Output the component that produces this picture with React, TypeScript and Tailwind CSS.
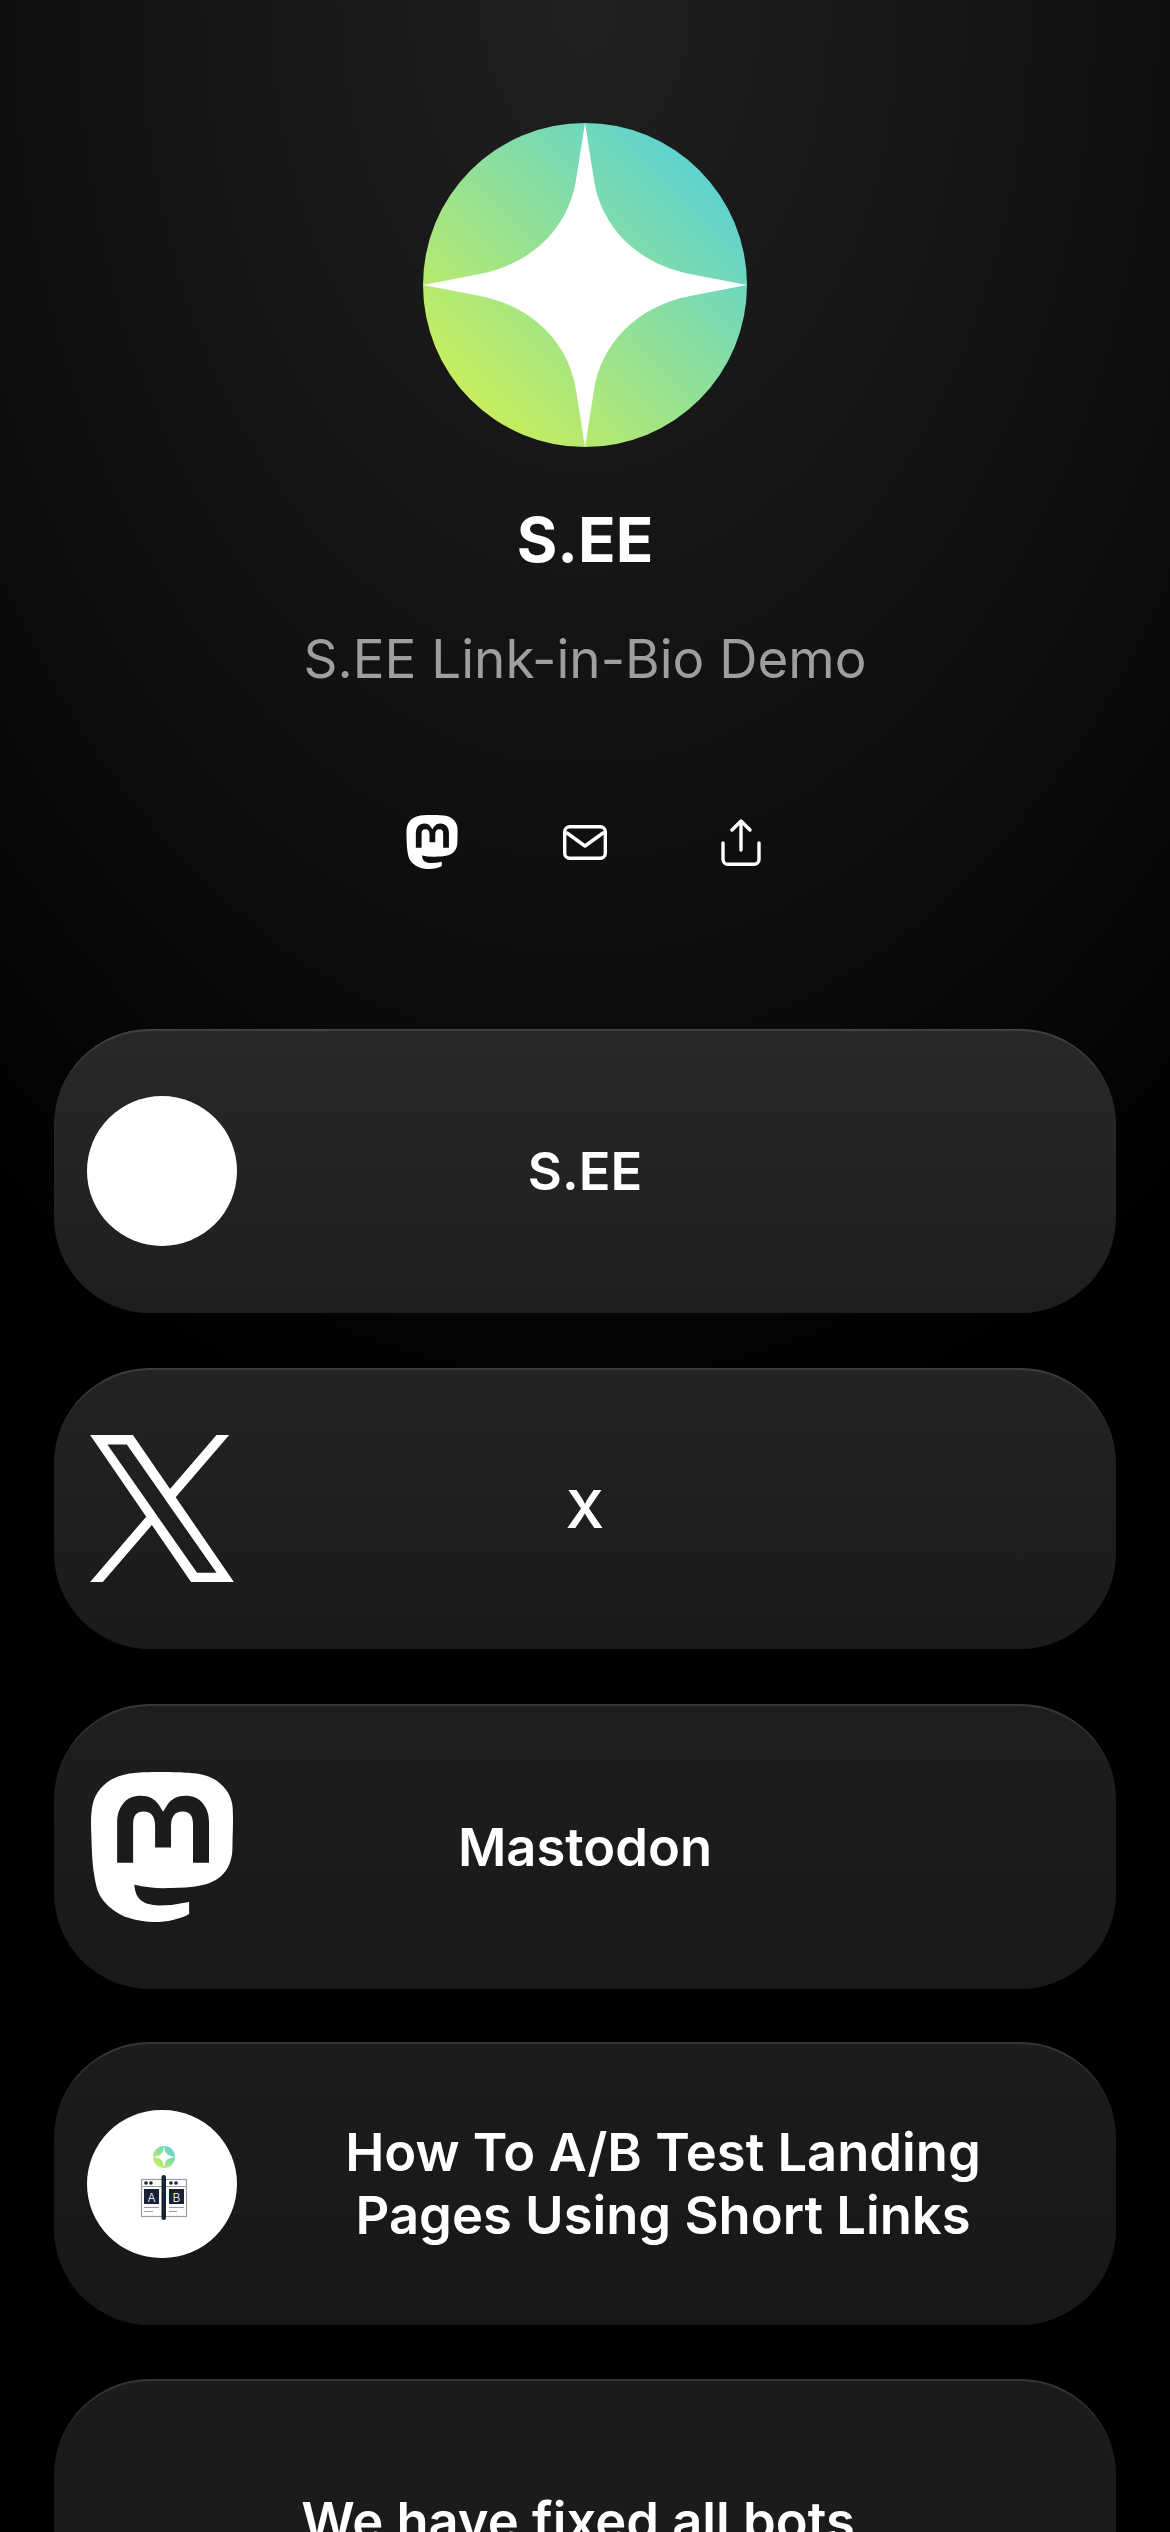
import React from "react";
import { SiMastodon } from "react-icons/si";

function StarLogo({ id, className }: { id: string; className: string }) {
  return (
    <svg viewBox="0 0 324 324" className={className}>
      <defs>
        <linearGradient id={id} x1="0.15" y1="0.85" x2="0.85" y2="0.15">
          <stop offset="0" stopColor="#c6ee5e" />
          <stop offset="1" stopColor="#5fd3ce" />
        </linearGradient>
      </defs>
      <circle cx="162" cy="162" r="162" fill={`url(#${id})`} />
      <path
        fill="#fff"
        d="M162 0L171 57C178 102 212 140 267 151L324 162L267 173C212 184 178 222 171 267L162 324L153 267C146 222 112 184 57 173L0 162L57 151C112 140 146 102 153 57Z"
      />
    </svg>
  );
}

function XLogo() {
  return (
    <svg viewBox="0 0 1200 1227" className="w-[146px] h-[147px]" fill="#fff">
      <path d="M714.163 519.284L1160.89 0H1055.03L667.137 450.887L357.328 0H0L468.492 681.821L0 1226.37H105.866L515.491 750.218L842.672 1226.37H1200L714.137 519.284H714.163ZM569.165 687.828L521.697 619.934L144.011 79.6944H306.615L611.412 515.685L658.88 583.579L1055.08 1150.3H892.476L569.165 687.854V687.828Z" />
    </svg>
  );
}

function AbThumb() {
  return (
    <div className="relative w-[150px] h-[148px] rounded-full bg-white shrink-0">
      <StarLogo id="thumb-star" className="absolute left-[66px] top-[36px] w-[22px] h-[22px]" />
      <svg viewBox="0 0 150 148" className="absolute inset-0 w-full h-full">
        <rect x="54.5" y="69.5" width="45" height="37" fill="#fff" stroke="#9b9ca5" strokeWidth="1.2" />
        <path d="M54.5 76.5H99.5" stroke="#9b9ca5" strokeWidth="1" />
        <circle cx="59" cy="73" r="1.8" fill="#1a2238" />
        <circle cx="64" cy="73" r="1.8" fill="#1a2238" />
        <circle cx="84" cy="73" r="1.8" fill="#1a2238" />
        <circle cx="89" cy="73" r="1.8" fill="#1a2238" />
        <rect x="57" y="79" width="15" height="15" fill="#1a2238" />
        <rect x="82" y="79" width="15" height="15" fill="#1a2238" />
        <text x="64.5" y="91.5" textAnchor="middle" fontFamily="Inter, sans-serif" fontSize="12" fontWeight="300" fill="#fff">A</text>
        <text x="89.5" y="91.5" textAnchor="middle" fontFamily="Inter, sans-serif" fontSize="12" fontWeight="300" fill="#fff">B</text>
        <path d="M57 97.5H72M57 101.5H66M82 97.5H97M82 101.5H90" stroke="#9b9ca5" strokeWidth="1.2" />
        <rect x="74.5" y="65" width="4.5" height="45" rx="2.2" fill="#1a2238" />
      </svg>
    </div>
  );
}

const cardBase =
  "flex items-center rounded-[96px] shadow-[inset_0_3px_1px_-1px_rgba(255,255,255,0.12)] pl-[33px] pr-[27px] shrink-0";

export default function App() {
  return (
    <div className="h-[2532px] overflow-hidden bg-[radial-gradient(ellipse_1000px_1500px_at_50%_0%,#202020_0%,#161616_35%,#0b0b0b_70%,#000000_100%)] font-[Inter,sans-serif] text-white">
      <div className="flex flex-col items-center pt-[123px]">
        <StarLogo id="main-star" className="w-[324px] h-[324px]" />
        <h1 className="mt-[54px] text-[62px] leading-[78px] font-bold">S.EE</h1>
        <p className="mt-[49px] text-[53px] leading-[62px] font-normal text-[#9e9e9e]">S.EE Link-in-Bio Demo</p>
        <div className="mt-[125px] h-[54px] flex items-center">
          <div className="w-[153px] flex justify-center">
            <SiMastodon className="w-[54px] h-[54px] text-white" />
          </div>
          <div className="w-[153px] flex justify-center">
            <svg viewBox="0 0 44 35" className="w-[44px] h-[35px]" fill="none" stroke="#fff" strokeWidth="3.4" strokeLinecap="round" strokeLinejoin="round">
              <rect x="1.7" y="1.7" width="40.6" height="31.6" rx="5" />
              <path d="M4 8L22 21L40 8" />
            </svg>
          </div>
          <div className="w-[153px] flex justify-center pl-[6px]">
            <svg viewBox="0 0 40 47" className="w-[40px] h-[47px]" fill="none" stroke="#fff" strokeWidth="3.4" strokeLinecap="round" strokeLinejoin="round">
              <path d="M20 2V31M11 11L20 2L29 11" />
              <path d="M2 24V40.5A4.8 4.8 0 0 0 6.8 45.3H33.2A4.8 4.8 0 0 0 38 40.5V24" />
            </svg>
          </div>
        </div>
      </div>

      <div className="mt-[160px] mx-[54px] flex flex-col">
        <div className={`${cardBase} h-[284px] bg-[linear-gradient(180deg,#282828,#1e1e1e)]`}>
          <div className="w-[150px] h-[150px] rounded-full bg-white shrink-0" />
          <div className="flex-1 mr-[156px] text-center text-[52.5px] leading-[62px] font-[570]">S.EE</div>
        </div>
        <div className={`${cardBase} mt-[55px] h-[281px] bg-[linear-gradient(180deg,#232323,#1a1a1a)]`}>
          <div className="w-[150px] flex justify-center shrink-0"><XLogo /></div>
          <div className="flex-1 mr-[156px] text-center text-[52.5px] leading-[62px] font-[570]">X</div>
        </div>
        <div className={`${cardBase} mt-[55px] h-[285px] bg-[linear-gradient(180deg,#1e1e1e,#191919)]`}>
          <div className="w-[150px] flex justify-center shrink-0">
            <SiMastodon className="w-[150px] h-[150px] text-white" />
          </div>
          <div className="flex-1 mr-[156px] text-center text-[52.5px] leading-[62px] font-[570]">Mastodon</div>
        </div>
        <div className={`${cardBase} mt-[53px] h-[283px] bg-[linear-gradient(180deg,#1c1c1c,#171717)]`}>
          <AbThumb />
          <div className="flex-1 text-center text-[52.5px] leading-[63px] font-[570]">
            How To A/B Test Landing
            <br />
            Pages Using Short Links
          </div>
        </div>
        <div className={`${cardBase} mt-[54px] h-[284px] bg-[#1b1b1b] items-start pt-[111px]`}>
          <div className="flex-1 mr-[20px] text-center text-[52.5px] leading-[63px] font-[570]">We have fixed all bots</div>
        </div>
      </div>
    </div>
  );
}
